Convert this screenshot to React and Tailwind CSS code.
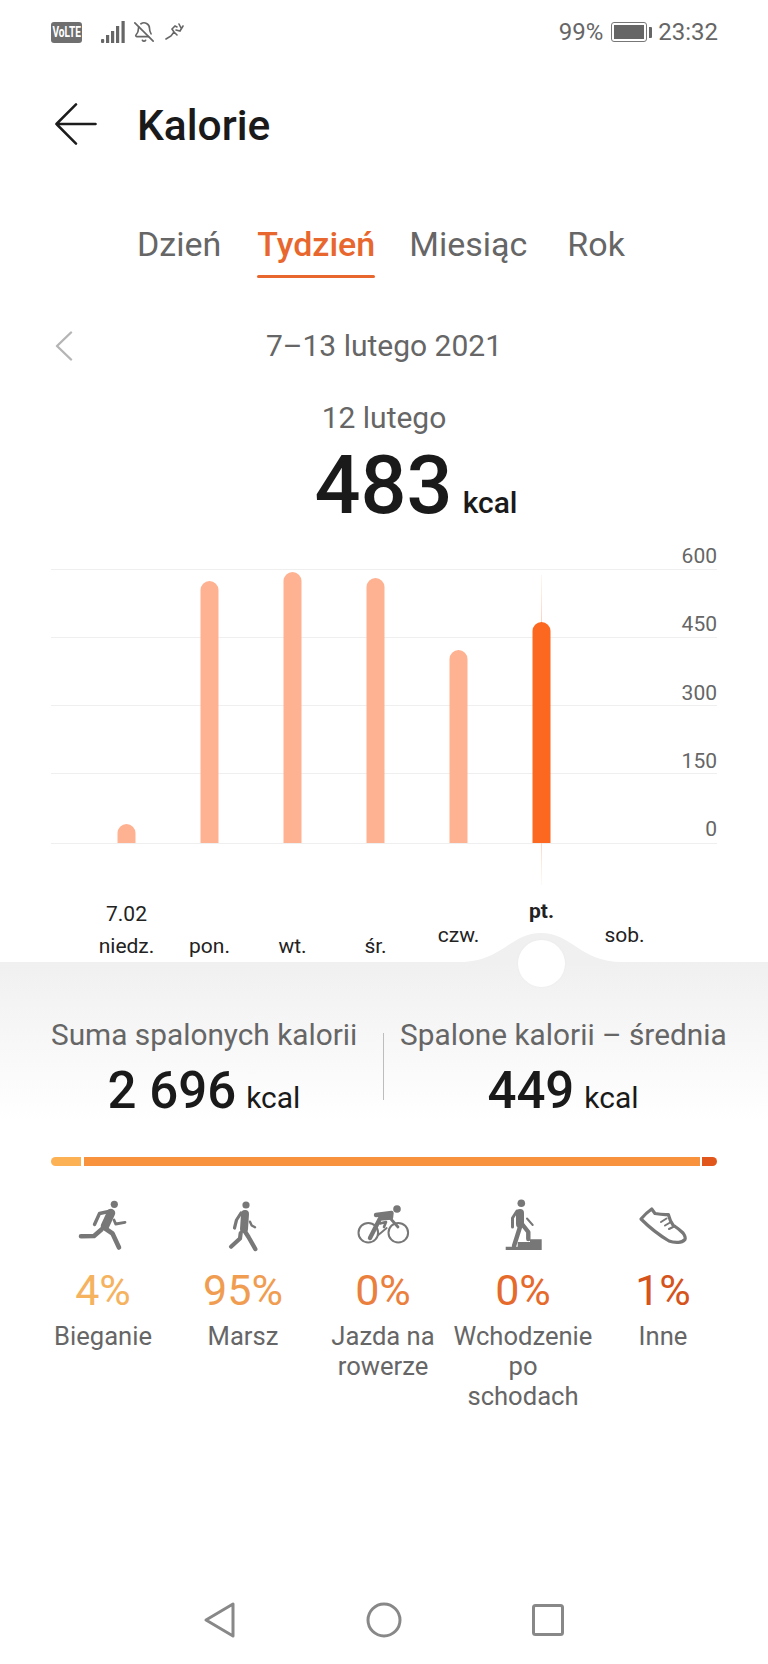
import { BellOff } from "lucide-react";

const bars = [
  { x: 126.5, top: 824 },
  { x: 209.5, top: 581 },
  { x: 292.5, top: 572 },
  { x: 375.5, top: 578 },
  { x: 458.5, top: 650 },
  { x: 541.5, top: 622, active: true },
];

const gridLines = [569, 637, 705, 773, 843];

const days = [
  { label: "niedz.", date: "7.02", pad: "pb-0" },
  { label: "pon.", pad: "pb-0" },
  { label: "wt.", pad: "pb-0" },
  { label: "śr.", pad: "pb-0" },
  { label: "czw.", pad: "pb-[11px]" },
  { label: "pt.", pad: "pb-[35px]", active: true },
  { label: "sob.", pad: "pb-[11px]" },
];

function RunIcon() {
  return (
    <svg viewBox="0 0 60 60" className="w-[60px] h-[60px]" fill="none" stroke="#777" strokeLinecap="round" strokeLinejoin="round">
      <circle cx="41.3" cy="8.3" r="3.6" fill="#777" stroke="none" />
      <path d="M38 15 L26.5 17.5 L21.5 28.5" strokeWidth="3.4" />
      <path d="M38 17 L32 30" strokeWidth="8.5" />
      <path d="M30 31 L39.5 37.5 L46 51.5" strokeWidth="4.6" />
      <path d="M28.5 33.5 L21 40 L8 40.3" strokeWidth="4.6" />
      <path d="M41 24 L42.7 28 L52 26.3" strokeWidth="2.8" />
    </svg>
  );
}

function WalkIcon() {
  return (
    <svg viewBox="0 0 60 60" className="w-[60px] h-[60px]" fill="none" stroke="#777" strokeLinecap="round" strokeLinejoin="round">
      <circle cx="33" cy="9" r="3.6" fill="#777" stroke="none" />
      <path d="M32 18 L31 33" strokeWidth="8" />
      <path d="M28 17 L23.5 24 L21.5 32" strokeWidth="3.2" />
      <path d="M31 34 L35.5 41 L42.3 53" strokeWidth="4.4" />
      <path d="M27.7 37 L27 42.5 L18 50.7" strokeWidth="4.2" />
      <path d="M37 25.7 L38.7 29.5 L42 31.3" strokeWidth="2.4" />
    </svg>
  );
}

function BikeIcon() {
  return (
    <svg viewBox="0 0 60 60" className="w-[60px] h-[60px]" fill="none" stroke="#777" strokeLinecap="round" strokeLinejoin="round">
      <circle cx="44" cy="13" r="3.8" fill="#777" stroke="none" />
      <circle cx="15.3" cy="36.7" r="9.8" strokeWidth="2" />
      <circle cx="45.3" cy="36.7" r="9.8" strokeWidth="2" />
      <path d="M23 19 L38.5 17 L38 21.5 L27 22.5 L17 42" strokeWidth="4.4" />
      <path d="M37 22 L45 31" strokeWidth="2.8" />
      <path d="M27 27.5 L33 26 L31 31" strokeWidth="2.6" />
      <path d="M25.3 39 L33.7 32" strokeWidth="1.8" />
    </svg>
  );
}

function StairsIcon() {
  return (
    <svg viewBox="0 0 60 60" className="w-[60px] h-[60px]" fill="none" stroke="#777" strokeLinecap="round" strokeLinejoin="round">
      <circle cx="28.3" cy="7.3" r="3.8" fill="#777" stroke="none" />
      <path d="M27 17 L27 28" strokeWidth="8" />
      <path d="M24 15 L19.5 22 L19.5 31" strokeWidth="3" />
      <path d="M27 31 L21 50" strokeWidth="4.4" />
      <path d="M29 28 L35.3 36 L35.3 43" strokeWidth="4.4" />
      <path d="M34 22.5 L39.7 29" strokeWidth="2" />
      <path d="M12.7 54 H48.7 V43.3 H37 V46 H24.7 V50.7 H12.7 Z" fill="#777" stroke="none" />
    </svg>
  );
}

function ShoeIcon() {
  return (
    <svg viewBox="0 0 60 60" className="w-[60px] h-[60px]" fill="none" stroke="#777" strokeWidth="3.2" strokeLinecap="round" strokeLinejoin="round">
      <path d="M8 23 Q13 17 18.7 13 L22 17.5 Q30 19 35.3 18.5 Q37 25 40 29 Q46 33 50 37 Q53 41 52 43.5 Q49 46.5 45 46.3 Q40 46.5 36 45 Q21 36 8 23 Z" />
      <path d="M28 26 L33.5 22.5 M32 29.5 L38 26 M36 33 L42 30" strokeWidth="2" />
    </svg>
  );
}

const stats = [
  { pct: "4%", name: "Bieganie", color: "text-[#f5b25f]", Icon: RunIcon },
  { pct: "95%", name: "Marsz", color: "text-[#f09d52]", Icon: WalkIcon },
  { pct: "0%", name: "Jazda na rowerze", color: "text-[#ea7f3e]", Icon: BikeIcon },
  { pct: "0%", name: "Wchodzenie po schodach", color: "text-[#e56a2c]", Icon: StairsIcon },
  { pct: "1%", name: "Inne", color: "text-[#d5531c]", Icon: ShoeIcon },
];

function StatusBar() {
  return (
    <div className="h-[64px] pl-[51px] pr-[50px] flex items-center justify-between text-[#666]">
      <div className="flex items-center">
        <div className="w-[31px] h-[21px] rounded-[3px] bg-[#6f6f6f] flex items-center justify-center">
          <span className="text-white text-[14px] font-bold leading-none scale-x-[0.72] whitespace-nowrap">VoLTE</span>
        </div>
        <svg viewBox="0 0 24 22" className="w-[24px] h-[22px] ml-[19px]" fill="#666">
          <rect x="0" y="18" width="3.2" height="4" rx="1" />
          <rect x="5" y="14" width="3.2" height="8" />
          <rect x="10" y="10" width="3.2" height="12" />
          <rect x="15" y="5" width="3.2" height="17" />
          <rect x="20.5" y="0" width="3.2" height="22" />
        </svg>
        <BellOff size={22} strokeWidth={1.8} color="#666" className="ml-[8px]" />
        <svg viewBox="0 0 20 18" className="w-[20px] h-[18px] ml-[10px]" fill="none" stroke="#666" strokeWidth="1.6" strokeLinecap="round">
          <path d="M1 16 L6 13 L9 9 L7 6 L10 3 L12 4 M9 9 L12 12 M11 7 L15 8 L18 3 M14 1 L16 5" />
        </svg>
      </div>
      <div className="flex items-center text-[24px] leading-none">
        <span>99%</span>
        <div className="ml-[8px] w-[36px] h-[20px] rounded-[3px] border border-[#777] p-[2px]">
          <div className="w-full h-full bg-[#666]" />
        </div>
        <div className="ml-[2px] w-[3px] h-[11px] bg-[#666] rounded-r-[1px]" />
        <span className="ml-[6px]">23:32</span>
      </div>
    </div>
  );
}

function Chart() {
  return (
    <div className="relative h-[350px]">
      <svg viewBox="0 540 768 350" className="w-[768px] h-[350px]">
        <defs>
          <linearGradient id="cursor" gradientUnits="userSpaceOnUse" x1="0" x2="0" y1="575" y2="885">
            <stop offset="0" stopColor="#fde0d2" stopOpacity="0.3" />
            <stop offset="0.15" stopColor="#fcd3bf" />
            <stop offset="0.85" stopColor="#fcd3bf" />
            <stop offset="1" stopColor="#fde0d2" stopOpacity="0.2" />
          </linearGradient>
        </defs>
        {gridLines.map((y) => (
          <line key={y} x1="51" x2="717" y1={y + 0.5} y2={y + 0.5} stroke="#efefef" strokeWidth="1" />
        ))}
        <rect x="541" y="575" width="1" height="310" fill="url(#cursor)" />
        {bars.map((b) => (
          <path
            key={b.x}
            d={`M${b.x - 9} 843 V${b.top + 9} a9 9 0 0 1 18 0 V843 Z`}
            fill={b.active ? "#fd6821" : "#ffb291"}
          />
        ))}
      </svg>
      <div className="absolute right-[51px] top-[2px] h-[301px] flex flex-col justify-between items-end text-[21px] leading-[28px] text-[#666]">
        <span>600</span>
        <span>450</span>
        <span>300</span>
        <span>150</span>
        <span>0</span>
      </div>
    </div>
  );
}

export default function App() {
  return (
    <div className="w-[768px] h-[1664px] bg-white flex flex-col overflow-hidden font-['Roboto',sans-serif]">
      <StatusBar />

      <div className="h-[124px] pl-[55px] flex items-center">
        <svg viewBox="0 0 44 44" className="w-[42px] h-[42px] mb-[4px]" fill="none" stroke="#1c1c1c" strokeWidth="2.6" strokeLinecap="round" strokeLinejoin="round">
          <path d="M22 1.5 L1.5 22 L22 42.5 M1.5 22 H42.5" />
        </svg>
        <h1 className="ml-[40px] text-[42.5px] leading-none font-medium text-[#1a1a1a]">Kalorie</h1>
      </div>

      <div className="mt-[36px] pl-[137px] flex text-[34px] leading-[40px] text-[#666]">
        <span>Dzień</span>
        <div className="ml-[36px] flex flex-col">
          <span className="font-medium text-[#e8672e]">Tydzień</span>
          <div className="mt-[11px] h-[3px] rounded-full bg-[#e8672e]" />
        </div>
        <span className="ml-[34px]">Miesiąc</span>
        <span className="ml-[40px]">Rok</span>
      </div>

      <div className="mt-[50px] h-[36px] relative flex items-center justify-center text-[30px] leading-[36px] text-[#666]">
        <svg viewBox="0 0 18 30" className="absolute left-[55px] top-[3px] w-[18px] h-[30px]" fill="none" stroke="#b5b5b5" strokeWidth="2.4" strokeLinecap="round" strokeLinejoin="round">
          <path d="M16 1.5 L2 15 L16 28.5" />
        </svg>
        <span>7–13 lutego 2021</span>
      </div>

      <div className="mt-[36px] text-center text-[30px] leading-[36px] text-[#666]">12 lutego</div>

      <div className="mt-[10px] h-[80px] pl-[64px] flex items-baseline justify-center leading-[80px] text-[#1a1a1a] font-medium">
        <span className="text-[81px]">483</span>
        <span className="ml-[10px] text-[30px]">kcal</span>
      </div>

      <div className="mt-[14px]">
        <Chart />
      </div>

      <div className="h-[72px] ml-[85px] w-[581px] grid grid-cols-7 items-end text-center text-[21px] leading-[32px] text-[#222]">
        {days.map((d) => (
          <div key={d.label} className={`${d.pad} ${d.active ? "font-bold" : ""}`}>
            {d.date && <div>{d.date}</div>}
            <div>{d.label}</div>
          </div>
        ))}
      </div>

      <div className="relative h-[158px] bg-linear-to-b from-[#f0f0f0] to-white">
        <svg viewBox="0 0 162 33" className="absolute left-[460px] top-[-32px] w-[162px] h-[33px]" fill="#f0f0f0">
          <path d="M0 33 V32 C42 32 50 3 81 3 C112 3 120 32 162 32 V33 Z" />
        </svg>
        <div className="absolute left-[518px] top-[-22px] w-[47px] h-[47px] rounded-full bg-white shadow-[0_0_3px_rgba(0,0,0,0.03)]" />

        <div className="pt-[55px] pl-[51px] flex">
          <div className="w-[306px] text-center">
            <div className="text-[29.8px] leading-[36px] text-[#666] whitespace-nowrap">Suma spalonych kalorii</div>
            <div className="mt-[8px] leading-[60px] text-[#1a1a1a] flex items-baseline justify-center">
              <span className="text-[51px] font-medium">2 696</span>
              <span className="ml-[10px] text-[30px]">kcal</span>
            </div>
          </div>
          <div className="ml-[26px] mt-[16px] w-px h-[67px] bg-[#bdbdbd]" />
          <div className="ml-[16px] w-[326px] text-center">
            <div className="text-[29.8px] leading-[36px] text-[#666] whitespace-nowrap">Spalone kalorii – średnia</div>
            <div className="mt-[8px] leading-[60px] text-[#1a1a1a] flex items-baseline justify-center">
              <span className="text-[51px] font-medium">449</span>
              <span className="ml-[10px] text-[30px]">kcal</span>
            </div>
          </div>
        </div>
      </div>

      <div className="mt-[37px] mx-[51px] h-[9px] flex gap-[2.5px]">
        <div className="w-[30px] rounded-l-full bg-[#fdb155]" />
        <div className="flex-1 bg-[#f9923d]" />
        <div className="w-[15px] rounded-r-full bg-[#e1561a]" />
      </div>

      <div className="mt-[30px] ml-[33px] w-[700px] grid grid-cols-5 text-center">
        {stats.map(({ pct, name, color, Icon }) => (
          <div key={name} className="flex flex-col items-center">
            <Icon />
            <div className={`mt-[10px] text-[43px] leading-[48px] ${color}`}>{pct}</div>
            <div className="mt-[7px] text-[25.6px] leading-[30px] text-[#666]">{name}</div>
          </div>
        ))}
      </div>

      <div className="mt-auto mb-[24px] flex justify-center gap-[124px]">
        <svg viewBox="0 0 40 40" className="w-[40px] h-[40px]" fill="none" stroke="#888" strokeWidth="3" strokeLinejoin="round">
          <path d="M6 20 L33 4 V36 Z" />
        </svg>
        <svg viewBox="0 0 40 40" className="w-[40px] h-[40px]" fill="none" stroke="#888" strokeWidth="3">
          <circle cx="20" cy="20" r="16" />
        </svg>
        <svg viewBox="0 0 40 40" className="w-[40px] h-[40px]" fill="none" stroke="#888" strokeWidth="3" strokeLinejoin="round">
          <rect x="5.5" y="5.5" width="29" height="29" rx="2" />
        </svg>
      </div>
    </div>
  );
}
